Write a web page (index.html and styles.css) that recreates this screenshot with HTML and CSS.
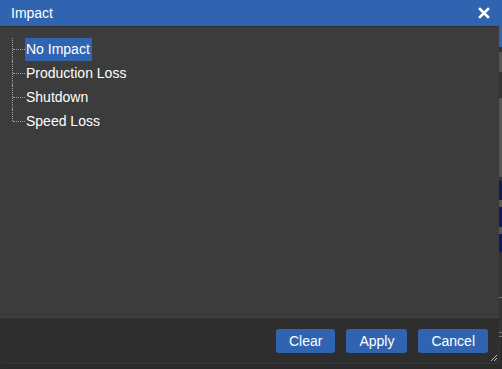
FILE: index.html
```html
<!DOCTYPE html>
<html lang="en">
<head>
    <meta charset="UTF-8">
    <title>Impact</title>
    <link rel="stylesheet" href="styles.css">
</head>
<body>
    <div class="page">
        <!-- ダイアログ -->
        <div class="dialog">
            <div class="titlebar">
                <span class="title">Impact</span>
                <svg class="close" width="12" height="12" viewBox="0 0 12 12">
                    <path d="M2 2 L10 10 M10 2 L2 10" stroke="#ffffff" stroke-width="2.6" stroke-linecap="square"/>
                </svg>
            </div>

            <div class="content">
                <ul class="tree">
                    <li><span class="label selected">No Impact</span></li>
                    <li><span class="label">Production Loss</span></li>
                    <li><span class="label">Shutdown</span></li>
                    <li><span class="label">Speed Loss</span></li>
                </ul>
            </div>

            <div class="footer">
                <button class="btn">Clear</button>
                <button class="btn">Apply</button>
                <button class="btn">Cancel</button>
                <svg class="grip" width="8" height="8" viewBox="0 0 8 8">
                    <path d="M1 7 L7 1 M4 7 L7 4" stroke="#bbbbbb" stroke-width="1"/>
                </svg>
            </div>
        </div>

        <!-- 背後のページ -->
        <div class="behind">
            <div class="seg blue" style="height: 47px"></div>
            <div class="seg dark" style="height: 5px"></div>
            <div class="seg grey" style="height: 20px"></div>
            <div class="seg dark" style="height: 26px"></div>
            <div class="seg grey" style="height: 79px"></div>
            <div class="seg dark" style="height: 4px"></div>
            <div class="seg navy" style="height: 19px"></div>
            <div class="seg grey" style="height: 7px"></div>
            <div class="seg navy" style="height: 20px"></div>
            <div class="seg grey" style="height: 7px"></div>
            <div class="seg navy" style="height: 18px"></div>
            <div class="seg dark" style="height: 45px"></div>
            <div class="seg line" style="height: 1px"></div>
            <div class="seg dark" style="height: 34px"></div>
            <div class="seg line" style="height: 1px"></div>
            <div class="seg dark" style="height: 3px"></div>
            <div class="seg line" style="height: 1px"></div>
        </div>
    </div>
</body>
</html>
```

FILE: styles.css
```css
body {
    margin: 0;
    padding: 0;
    background: #2a2a2a;
    font-family: "Liberation Sans", Arial, sans-serif;
    font-size: 14px;
    color: #ffffff;
}
.page {
    display: flex;
    align-items: flex-start;
    width: 502px;
    height: 369px;
    overflow: hidden;
}
.dialog {
    width: 499px;
    height: 363px;
    flex-shrink: 0;
    display: flex;
    flex-direction: column;
    background: #3c3c3c;
    border-radius: 0 0 4px 4px;
    box-shadow: 0 0 0 1px #363636;
    overflow: hidden;
}
.titlebar {
    height: 27px;
    flex-shrink: 0;
    display: flex;
    align-items: center;
    justify-content: space-between;
    padding: 0 9px 0 11px;
    background: #3164b0;
    border-bottom: 1px solid #2d2d2d;
    box-sizing: border-box;
}
.title {
    font-size: 14px;
    line-height: 27px;
}
.close {
    display: block;
    margin-top: -1px;
}
.content {
    flex: 1;
    padding: 10px 0 0 12px;
}
.tree {
    list-style: none;
    margin: 0;
    padding: 0;
}
.tree li {
    position: relative;
    height: 24px;
    display: flex;
    align-items: center;
    padding-left: 13px;
}
/* 縦の点線 */
.tree li::before {
    content: "";
    position: absolute;
    left: 0;
    top: 0;
    bottom: 0;
    border-left: 1px dotted #a0a0a0;
}
.tree li:first-child::before {
    top: 1px;
}
.tree li:last-child::before {
    bottom: 12px;
}
/* 横の点線 */
.tree li::after {
    content: "";
    position: absolute;
    left: 1px;
    top: 12px;
    width: 12px;
    border-top: 1px dotted #a0a0a0;
}
.label {
    display: inline-block;
    height: 23px;
    line-height: 23px;
    padding: 0 2px 0 1px;
    color: #ffffff;
}
.label.selected {
    background: #3164b0;
}
.footer {
    position: relative;
    height: 46px;
    flex-shrink: 0;
    display: flex;
    align-items: center;
    justify-content: flex-end;
    gap: 11px;
    padding-right: 11px;
    background: #2e2e2e;
    border-top: 1px solid #444444;
    box-sizing: border-box;
}
.btn {
    height: 24px;
    padding: 0 13px;
    border: none;
    border-radius: 3px;
    background: #3164b0;
    color: #ffffff;
    font-family: "Liberation Sans", Arial, sans-serif;
    font-size: 14px;
    cursor: pointer;
}
.grip {
    position: absolute;
    right: 1px;
    bottom: 1px;
}
.behind {
    width: 3px;
    display: flex;
    flex-direction: column;
}
.seg.blue { background: #3164b0; }
.seg.dark { background: #333333; }
.seg.grey { background: #555555; }
.seg.navy { background: #0e1a5a; }
.seg.line { background: #777777; }
```
